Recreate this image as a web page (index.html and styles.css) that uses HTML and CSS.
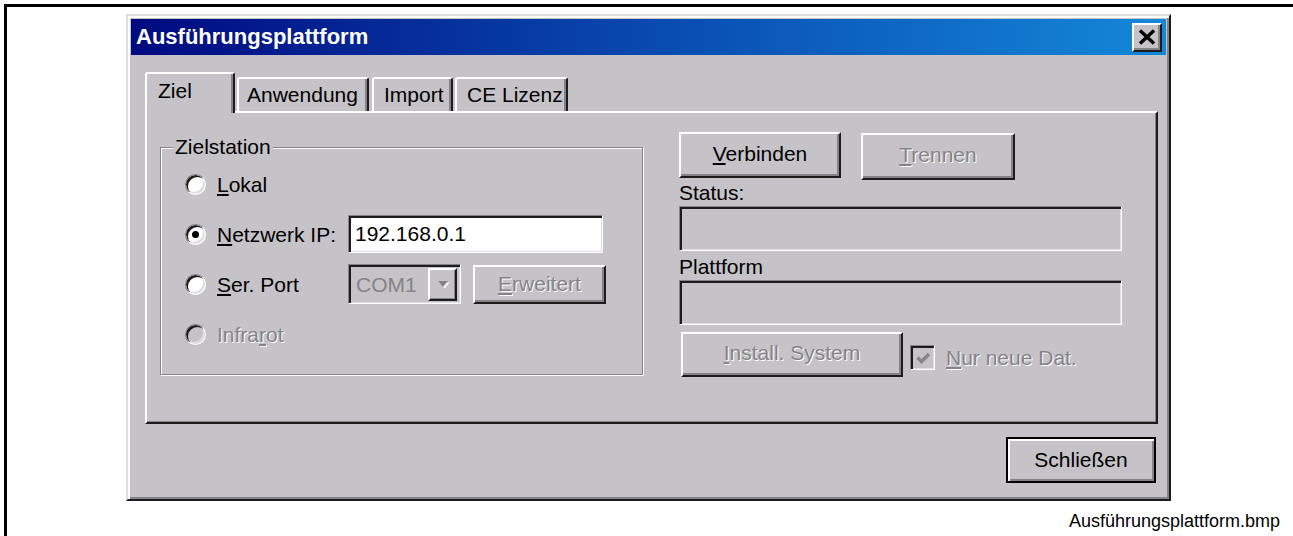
FILE: index.html
```html
<!DOCTYPE html>
<html lang="de">
<head>
<meta charset="utf-8">
<title>Ausführungsplattform</title>
<link rel="stylesheet" href="styles.css">
</head>
<body>
<div class="page">
  <div class="dialog">
    <div class="titlebar">
      <span class="title">Ausführungsplattform</span>
      <div class="close">
        <svg width="18" height="16" viewBox="0 0 18 16" aria-hidden="true">
          <path d="M2 1.5 L16 14.5 M16 1.5 L2 14.5" stroke="#000" stroke-width="3.4" fill="none"/>
        </svg>
      </div>
    </div>

    <div class="body">
      <div class="tabs">
        <div class="tab tab-active tab-ziel">Ziel</div>
        <div class="tab tab-anw">Anwendung</div>
        <div class="tab tab-imp">Import</div>
        <div class="tab tab-ce">CE Lizenz</div>
      </div>

      <div class="panel">
        <div class="group">
          <span class="legend">Zielstation</span>
          <div class="opt">
            <span class="radio"></span>
            <span class="label"><u>L</u>okal</span>
          </div>
          <div class="opt">
            <span class="radio checked"></span>
            <span class="label"><u>N</u>etzwerk IP:</span>
            <div class="edit">192.168.0.1</div>
          </div>
          <div class="opt">
            <span class="radio"></span>
            <span class="label"><u>S</u>er. Port</span>
            <div class="combo">
              <span class="combo-text">COM1</span>
              <span class="combo-btn">
                <svg width="16" height="11" viewBox="0 0 16 11" aria-hidden="true">
                  <path d="M3 2 L13 2 L8 8 Z" fill="#fff" transform="translate(1.5 1.5)"/>
                  <path d="M3 2 L13 2 L8 8 Z" fill="#858387"/>
                </svg>
              </span>
            </div>
            <div class="btn btn-extra disabled"><span><u>E</u>rweitert</span></div>
          </div>
          <div class="opt">
            <span class="radio radio-off"></span>
            <span class="label disabled-text">Infra<u>r</u>ot</span>
          </div>
        </div>

        <div class="conn">
          <div class="btn-row">
            <div class="btn btn-connect"><span><u>V</u>erbinden</span></div>
            <div class="btn btn-disconnect disabled"><span><u>T</u>rennen</span></div>
          </div>
          <div class="field-label field-label-status">Status:</div>
          <div class="field"></div>
          <div class="field-label field-label-platform">Plattform</div>
          <div class="field"></div>
          <div class="install-row">
            <div class="btn btn-install disabled"><span><u>I</u>nstall. System</span></div>
            <span class="check">
              <svg width="21" height="21" viewBox="0 0 21 21" aria-hidden="true">
                <path d="M4.5 9.5 L8.5 13.5 L16 6" stroke="#858387" stroke-width="3.4" fill="none"/>
              </svg>
            </span>
            <span class="check-label disabled-text"><u>N</u>ur neue Dat.</span>
          </div>
        </div>
      </div>

      <div class="footer">
        <div class="btn btn-default"><span>Schließen</span></div>
      </div>
    </div>
  </div>
  <div class="caption">Ausführungsplattform.bmp</div>
</div>
</body>
</html>
```

FILE: styles.css
```css
html, body {
  margin: 0;
  padding: 0;
  background: #fff;
}

body {
  font-family: "Liberation Sans", Arial, sans-serif;
  font-size: 21px;
  color: #000;
}

/* framed figure area */
.page {
  margin: 4px 0 0 4px;
  height: 532px;
  box-sizing: border-box;
  border-top: 3px solid #000;
  border-left: 3px solid #000;
  overflow: hidden;
}

/* dialog window */
.dialog {
  margin: 7px 0 0 119px;
  width: 1045px;
  height: 487px;
  box-sizing: border-box;
  background: #c5c3c7;
  border: 2px solid;
  border-color: #dedde0 #1c1c1c #1c1c1c #dedde0;
  box-shadow: inset 2px 2px 0 #fff, inset -2px -2px 0 #858387;
  padding: 3px;
}

.titlebar {
  height: 36px;
  display: flex;
  align-items: center;
  justify-content: space-between;
  padding: 0 4px 0 5px;
  background: linear-gradient(90deg, #000a80 0%, #0a50b4 55%, #1488d8 100%);
}

.title {
  color: #fff;
  font-weight: bold;
  font-size: 22px;
  line-height: 22px;
}

.close {
  width: 30px;
  height: 29px;
  box-sizing: border-box;
  background: #c5c3c7;
  border: 2px solid;
  border-color: #fff #1c1c1c #1c1c1c #fff;
  box-shadow: inset -2px -2px 0 #858387;
  display: flex;
  align-items: center;
  justify-content: center;
  padding: 0 1px 1px 0;
}

.body {
  padding: 17px 8px 0 14px;
}

/* tab strip */
.tabs {
  height: 39px;
  display: flex;
  align-items: flex-end;
}

.tab {
  box-sizing: border-box;
  height: 34px;
  line-height: 21px;
  padding-top: 5px;
  border-top: 2px solid #fff;
  border-left: 2px solid #fff;
  border-right: 2px solid #1c1c1c;
  border-radius: 3px 3px 0 0;
  box-shadow: inset -2px 0 0 #858387;
  background: #c5c3c7;
  white-space: nowrap;
}

.tab-active {
  height: 41px;
  margin-bottom: -2px;
  padding-top: 6px;
  position: relative;
  z-index: 1;
}

.tab-ziel { width: 90px; padding-left: 11px; }
.tab-anw  { width: 132px; margin-left: 2px; padding-left: 8px; }
.tab-imp  { width: 81px; margin-left: 3px; padding-left: 10px; }
.tab-ce   { width: 113px; margin-left: 2px; padding-left: 10px; }

/* tab page */
.panel {
  height: 313px;
  box-sizing: border-box;
  border: 2px solid;
  border-color: #fff #1c1c1c #1c1c1c #fff;
  box-shadow: inset -1px -1px 0 #858387;
  padding: 19px 0 0 13px;
  display: flex;
  align-items: flex-start;
}

/* group box */
.group {
  position: relative;
  width: 483px;
  height: 228px;
  margin-top: 15px;
  box-sizing: border-box;
  border: 1px solid #858387;
  box-shadow: inset 1px 1px 0 #fff, 1px 1px 0 #fff;
  padding: 16px 0 0 24px;
  display: flex;
  flex-direction: column;
  gap: 10px;
}

.legend {
  position: absolute;
  top: -12px;
  left: 12px;
  padding: 0 2px;
  line-height: 21px;
  background: #c5c3c7;
}

.opt {
  height: 40px;
  display: grid;
  grid-template-columns: 20px 119px auto auto;
  justify-content: start;
  column-gap: 12px;
  align-items: center;
}

.label {
  line-height: 21px;
  white-space: nowrap;
}

.radio {
  width: 21px;
  height: 21px;
  box-sizing: border-box;
  border-radius: 50%;
  border: 1px solid;
  border-color: #858387 #fff #fff #858387;
  box-shadow: inset 2px 2px 0 #1c1c1c, inset -2px -2px 0 #dedde0;
  background: #fff;
  display: flex;
  align-items: center;
  justify-content: center;
}

.radio.checked::after {
  content: "";
  width: 7px;
  height: 7px;
  border-radius: 50%;
  background: #000;
}

.radio-off {
  background: #c5c3c7;
}

.disabled-text,
.disabled span {
  color: #858387;
  text-shadow: 1px 1px 0 #fff;
}

/* edit box */
.edit {
  width: 255px;
  height: 38px;
  box-sizing: border-box;
  border: 1px solid;
  border-color: #858387 #fff #fff #858387;
  box-shadow: inset 2px 2px 0 #1c1c1c, inset -1px -1px 0 #dedde0;
  background: #fff;
  padding: 3px 0 0 6px;
  line-height: 30px;
}

/* combo box */
.combo {
  width: 113px;
  height: 40px;
  box-sizing: border-box;
  border: 1px solid;
  border-color: #858387 #fff #fff #858387;
  box-shadow: inset 2px 2px 0 #1c1c1c, inset -1px -1px 0 #dedde0;
  background: #c5c3c7;
  display: flex;
  align-items: center;
  justify-content: space-between;
  padding: 3px 3px 2px 7px;
}

.combo-text {
  color: #858387;
  line-height: 21px;
}

.combo-btn {
  width: 29px;
  height: 33px;
  box-sizing: border-box;
  border: 2px solid;
  border-color: #fff #1c1c1c #1c1c1c #fff;
  box-shadow: inset -1px -1px 0 #858387;
  display: flex;
  align-items: center;
  justify-content: center;
}

/* push buttons */
.btn {
  box-sizing: border-box;
  border: 2px solid;
  border-color: #fff #1c1c1c #1c1c1c #fff;
  box-shadow: inset -2px -2px 0 #858387;
  background: #c5c3c7;
  display: flex;
  align-items: center;
  justify-content: center;
  line-height: 21px;
  padding-bottom: 4px;
  white-space: nowrap;
}

.btn-extra { width: 133px; height: 39px; padding-bottom: 2px; }

.conn {
  margin-left: 36px;
  width: 443px;
  display: flex;
  flex-direction: column;
}

.btn-row {
  display: flex;
  gap: 20px;
}

.btn-connect { width: 162px; height: 46px; }
.btn-disconnect { width: 154px; height: 47px; margin-top: 1px; }

.field-label {
  line-height: 21px;
}

.field-label-status { margin-top: 2px; }
.field-label-platform { margin-top: 5px; }

.field {
  height: 45px;
  margin-top: 3px;
  box-sizing: border-box;
  border: 1px solid;
  border-color: #858387 #fff #fff #858387;
  box-shadow: inset 2px 2px 0 #1c1c1c, inset -1px -1px 0 #dedde0;
  background: #c5c3c7;
}

.install-row {
  margin-top: 7px;
  display: flex;
  align-items: center;
}

.btn-install {
  width: 222px;
  height: 45px;
  margin-left: 2px;
}

.check {
  width: 25px;
  height: 25px;
  margin: 6px 0 0 7px;
  box-sizing: border-box;
  border: 1px solid;
  border-color: #858387 #fff #fff #858387;
  box-shadow: inset 2px 2px 0 #1c1c1c, inset -1px -1px 0 #dedde0;
  background: #c5c3c7;
  display: flex;
  align-items: center;
  justify-content: center;
  padding: 2px 0 0 2px;
}

.check-label {
  margin: 5px 0 0 11px;
  line-height: 21px;
}

.footer {
  display: flex;
  justify-content: flex-end;
  padding: 13px 2px 0 0;
}

.btn-default {
  width: 150px;
  height: 46px;
  border: 2px solid #000;
  box-shadow: inset 2px 2px 0 #fff, inset -2px -2px 0 #858387;
  padding-bottom: 2px;
}

/* figure caption */
.caption {
  margin-top: 11px;
  padding-right: 13px;
  text-align: right;
  font-size: 18px;
  line-height: 18px;
}
```
